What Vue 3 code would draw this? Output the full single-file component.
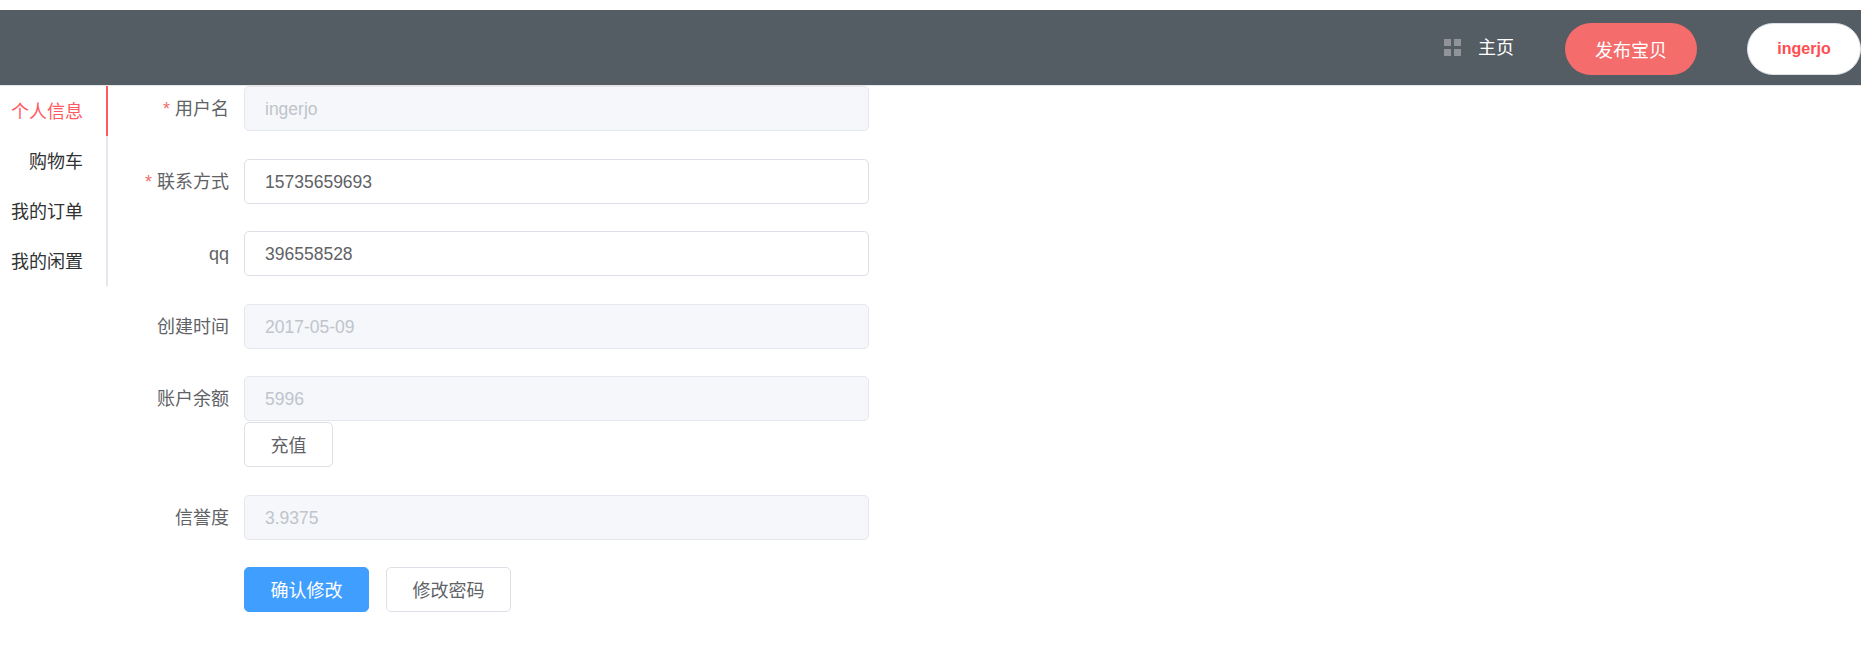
<script setup>
const menu = [
  { label: '个人信息', active: true },
  { label: '购物车' },
  { label: '我的订单' },
  { label: '我的闲置' },
]
const fields = [
  { label: '用户名', value: 'ingerjo', required: true, disabled: true },
  { label: '联系方式', value: '15735659693', required: true },
  { label: 'qq', value: '396558528' },
  { label: '创建时间', value: '2017-05-09', disabled: true },
  { label: '账户余额', value: '5996', disabled: true, action: '充值' },
  { label: '信誉度', value: '3.9375', disabled: true },
]
</script>

<template>
  <div class="page">
    <header class="topbar">
      <div class="home">
        <svg class="grid-icon" width="17" height="17" viewBox="0 0 17 17" aria-hidden="true">
          <rect x="0" y="0" width="7" height="7" />
          <rect x="10" y="0" width="7" height="7" />
          <rect x="0" y="10" width="7" height="7" />
          <rect x="10" y="10" width="7" height="7" />
        </svg>
        <span>主页</span>
      </div>
      <button class="publish" type="button">发布宝贝</button>
      <button class="user" type="button">ingerjo</button>
    </header>
    <main class="body">
      <nav class="menu">
        <a v-for="item in menu" :key="item.label" class="menu-item" :class="{ active: item.active }">{{ item.label }}</a>
      </nav>
      <form class="form" @submit.prevent>
        <div v-for="f in fields" :key="f.label" class="row">
          <label class="label"><i v-if="f.required" class="star">*</i>{{ f.label }}</label>
          <div class="control">
            <input class="input" :class="{ disabled: f.disabled }" :value="f.value" :disabled="f.disabled" />
            <button v-if="f.action" class="btn recharge" type="button">{{ f.action }}</button>
          </div>
        </div>
        <div class="actions">
          <button class="btn primary" type="button">确认修改</button>
          <button class="btn" type="button">修改密码</button>
        </div>
      </form>
    </main>
  </div>
</template>

<style>
html, body { margin: 0; background: #fff; }
</style>

<style scoped>
.page {
  padding-top: 10px;
  font-family: "Liberation Sans", "Noto Sans CJK SC", sans-serif;
  font-size: 18px;
  font-weight: 400;
  color: #606266;
}
.topbar {
  height: 75px;
  box-sizing: content-box;
  border-bottom: 1px solid #e6e6e6;
  background: #545c64;
  display: flex;
  align-items: center;
  justify-content: flex-end;
}
.home {
  display: flex;
  align-items: center;
  color: #fff;
  margin-right: 51px;
  margin-top: -3px;
}
.grid-icon { fill: #909399; margin-right: 17px; margin-top: 2px; }
.publish {
  width: 132px;
  height: 52px;
  border: 0;
  border-radius: 26px;
  background: #f56c6c;
  color: #fff;
  font: inherit;
  padding: 0;
  margin-right: 50px;
  margin-top: 2px;
}
.user {
  width: 114px;
  height: 52px;
  border: 1px solid #dcdfe6;
  border-radius: 26px;
  background: #fff;
  color: #ff4d51;
  font: inherit;
  font-size: 16px;
  font-weight: 700;
  padding: 0;
  margin-top: 2px;
}
.body { display: flex; align-items: flex-start; }
.menu {
  width: 108px;
  box-sizing: border-box;
  border-right: 2px solid #e4e7ed;
  flex: none;
}
.menu-item {
  display: block;
  height: 50px;
  line-height: 52px;
  padding-right: 25px;
  margin-right: -2px;
  text-align: right;
  color: #303133;
  box-sizing: border-box;
}
.menu-item.active {
  color: #ff5a5f;
  border-right: 2px solid #ff5a5f;
  padding-right: 23px;
}
.form { width: 761px; }
.row { display: flex; margin-bottom: 27.5px; }
.label {
  width: 121px;
  height: 45px;
  padding-right: 15px;
  flex: none;
  line-height: 47px;
  text-align: right;
  white-space: nowrap;
}
.star { color: #f56c6c; font-style: normal; margin-right: 5px; }
.control { flex: 1; display: flex; flex-direction: column; align-items: flex-start; gap: 1px; }
.input {
  width: 100%;
  height: 45px;
  box-sizing: border-box;
  border: 1px solid #dcdfe6;
  border-radius: 5px;
  padding: 2px 20px 0;
  background: #fff;
  color: #606266;
  font: inherit;
  font-size: 17.5px;
  outline: none;
}
.input.disabled {
  background: #f5f7fa;
  border-color: #e4e7ed;
  color: #c0c4cc;
}
.btn {
  height: 45px;
  width: 125px;
  box-sizing: border-box;
  border: 1px solid #dcdfe6;
  border-radius: 5px;
  background: #fff;
  color: #606266;
  font: inherit;
  padding: 0 0 2px;
}
.recharge { width: 89px; }
.primary { background: #409eff; border-color: #409eff; color: #fff; }
.actions { display: flex; gap: 17px; padding-left: 136px; margin-top: 1px; }
</style>
